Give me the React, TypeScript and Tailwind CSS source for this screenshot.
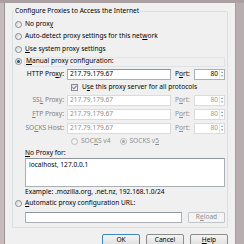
import React from "react"

function Radio({ checked = false, disabled = false }: { checked?: boolean; disabled?: boolean }) {
  return (
    <span
      className={`flex items-center justify-center shrink-0 w-[7px] h-[7px] rounded-full border bg-linear-to-br ${
        disabled ? "border-[#b9b9b9] from-[#ececec] to-[#f8f8f8]" : "border-[#8a8a8a] from-[#d6d6d6] to-[#fdfdfd]"
      }`}
    >
      {checked && <span className={`w-[3px] h-[3px] rounded-full ${disabled ? "bg-[#9aa7b4]" : "bg-[#1d4f8a]"}`} />}
    </span>
  )
}

function Check() {
  return (
    <span className="flex items-center justify-center shrink-0 w-[7px] h-[7px] border border-[#8a8a8a] bg-linear-to-br from-[#dedede] to-[#fbfbfb]">
      <svg width="5" height="5" viewBox="0 0 5 5">
        <path d="M0.6 2.4 L2 3.8 L4.5 0.8" fill="none" stroke="#3a4e8c" strokeWidth="1" />
      </svg>
    </span>
  )
}

// access key underline
function K({ children }: { children: React.ReactNode }) {
  return <span className="underline underline-offset-[1px] decoration-[0.6px]">{children}</span>
}

function Field({ value, disabled = false, className = "" }: { value: string; disabled?: boolean; className?: string }) {
  return (
    <span
      className={`flex items-center h-[11px] bg-white border px-[2px] leading-none ${
        disabled ? "border-[#d9dcdf] text-[#8d8d8d]" : "border-[#a9b0b8] border-t-[#8e959d] text-black"
      } ${className}`}
    >
      {value}
    </span>
  )
}

function Port({ disabled = false }: { disabled?: boolean }) {
  return (
    <span className={`flex h-[11px] w-[31px] ml-[4px] bg-white border ${disabled ? "border-[#d9dcdf]" : "border-[#a9b0b8]"}`}>
      <span className={`flex-1 flex items-center justify-end pr-[1px] leading-none ${disabled ? "text-[#9a9a9a]" : "text-black"}`}>80</span>
      <span className="flex flex-col w-[5px] border-l border-[#e2e4e6]">
        <span className="flex-1 flex items-center justify-center text-[3px] text-[#7a7a7a] leading-none">▲</span>
        <span className="flex-1 flex items-center justify-center text-[3px] text-[#7a7a7a] leading-none">▼</span>
      </span>
    </span>
  )
}

function ProxyRow({ label, disabled = false }: { label: React.ReactNode; disabled?: boolean }) {
  return (
    <div className="flex items-center h-[13px]">
      <span className={`w-[51px] text-right whitespace-nowrap ${disabled ? "text-[#7d7d7d]" : "text-black"}`}>{label}</span>
      <Field value="217.79.179.67" disabled={disabled} className="ml-[3px] w-[104px]" />
      <span className={`ml-[4px] w-[15px] ${disabled ? "text-[#8d8d8d]" : "text-black"}`}>
        P<K>o</K>rt:
      </span>
      <Port disabled={disabled} />
    </div>
  )
}

function Btn({ label, primary = false }: { label: React.ReactNode; primary?: boolean }) {
  return (
    <span
      className={`flex items-start justify-center pt-[2px] w-[38px] h-[14px] rounded-[2px] border bg-linear-to-b from-[#f4f4f4] to-[#dcdcdc] ${
        primary ? "border-[#3c86c3]" : "border-[#8a8a8a]"
      }`}
    >
      {label}
    </span>
  )
}

export default function App() {
  return (
    <div className="w-[244px] h-[244px] overflow-hidden flex flex-col bg-[#b8adae] font-['Noto_Sans',sans-serif] text-[6.6px] leading-none text-black">
      <div className="h-[3px] shrink-0 bg-[#aaa0a1]" />
      <div className="flex flex-1">
        <div className="w-[5px] shrink-0 bg-[#c6bcbd] border-r border-[#9d9394]" />
        <div className="w-[230px] bg-[#f0f0f0] flex flex-col pt-[8px] whitespace-nowrap">
          <div className="ml-[7px] w-[216px] border border-[#d5dfe5] rounded-[2px] flex flex-col">
            <span className="-mt-[6px] ml-[1px] h-[10px] px-[1px] w-fit bg-[#f0f0f0] flex items-center">
              Configure Proxies to Access the Internet
            </span>
            <div className="h-[2px]" />
            <div className="flex items-center h-[12px] pl-[2px] gap-[3px]">
              <Radio />
              <span>
                No prox<K>y</K>
              </span>
            </div>
            <div className="flex items-center h-[13px] pl-[2px] gap-[3px]">
              <Radio />
              <span>
                Auto-detect proxy settings for this net<K>w</K>ork
              </span>
            </div>
            <div className="flex items-center h-[12px] pl-[2px] gap-[3px]">
              <Radio />
              <span>
                <K>U</K>se system proxy settings
              </span>
            </div>
            <div className="flex items-center h-[13px] pl-[2px] gap-[2px]">
              <Radio checked />
              <span className="flex-1 mr-[2px] h-[10px] flex items-center pl-[1px] border border-[#dde3e8]">
                <K>M</K>anual proxy configuration:
              </span>
            </div>
            <ProxyRow
              label={
                <>
                  HTTP Pro<K>x</K>y:
                </>
              }
            />
            <div className="flex items-center h-[13px] pl-[58px] gap-[4px]">
              <Check />
              <span>
                U<K>s</K>e this proxy server for all protocols
              </span>
            </div>
            <ProxyRow
              label={
                <>
                  SS<K>L</K> Proxy:
                </>
              }
              disabled
            />
            <div className="h-[1px]" />
            <ProxyRow
              label={
                <>
                  <K>F</K>TP Proxy:
                </>
              }
              disabled
            />
            <div className="h-[1px]" />
            <ProxyRow
              label={
                <>
                  SO<K>C</K>KS Host:
                </>
              }
              disabled
            />
            <div className="flex items-center h-[13px] pl-[58px] text-[#8d8d8d]">
              <Radio disabled />
              <span className="ml-[3px]">
                SOC<K>K</K>S v4
              </span>
              <span className="ml-[9px]">
                <Radio checked disabled />
              </span>
              <span className="ml-[3px]">
                SOCKS v<K>5</K>
              </span>
            </div>
            <div className="flex items-center h-[10px] pl-[12px]">
              <span>
                <K>N</K>o Proxy for:
              </span>
            </div>
            <div className="ml-[12px] mr-[2px] h-[29px] bg-white border border-[#a9b0b8] border-t-[#8e959d] px-[3px] pt-[3px]">
              localhost, 127.0.0.1
            </div>
            <div className="flex items-center h-[11px] pl-[12px]">Example: .mozilla.org, .net.nz, 192.168.1.0/24</div>
            <div className="flex items-center h-[10px] pl-[2px] gap-[3px]">
              <Radio />
              <span>
                <K>A</K>utomatic proxy configuration URL:
              </span>
            </div>
            <div className="h-[3px]" />
            <div className="flex items-center h-[13px] pl-[12px] pr-[2px] gap-[6px]">
              <Field value="" className="w-[157px]" />
              <span className="flex-1 h-[11px] flex items-center justify-center border border-[#c3c6c9] bg-[#f4f4f4] text-[#8d8d8d] rounded-[1px]">
                <span>
                  R<K>e</K>load
                </span>
              </span>
            </div>
            <div className="h-[3px]" />
          </div>
          <div className="flex justify-end gap-[6px] pr-[7px] mt-[6px]">
            <Btn label="OK" primary />
            <Btn label="Cancel" />
            <Btn
              label={
                <>
                  <K>H</K>elp
                </>
              }
            />
          </div>
        </div>
        <div className="flex-1 bg-[#b9aeaf] border-l border-[#a0a0a0]" />
      </div>
    </div>
  )
}
